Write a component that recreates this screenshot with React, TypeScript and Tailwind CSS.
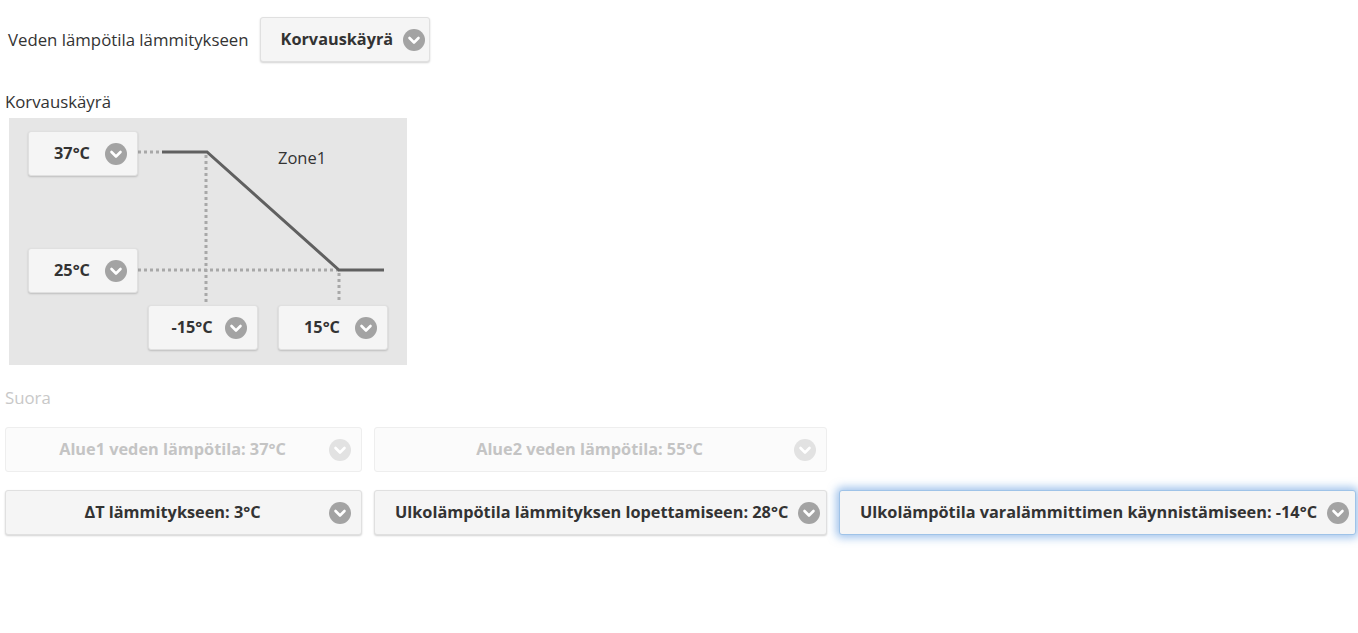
import React from "react";

function Chevron({ disabled }: { disabled?: boolean }) {
  return (
    <svg width="22" height="22" viewBox="0 0 22 22" className="shrink-0">
      <circle cx="11" cy="11" r="11" fill={disabled ? "#e2e2e2" : "#a3a3a3"} />
      <path d="M6.5 9 L11 13.5 L15.5 9" fill="none" stroke="#ffffff" strokeWidth="2.6" strokeLinecap="round" strokeLinejoin="round" />
    </svg>
  );
}

function Btn({
  label,
  className = "",
  disabled,
  focused,
}: {
  label: string;
  className?: string;
  disabled?: boolean;
  focused?: boolean;
}) {
  const base =
    "flex items-center h-[45px] pl-[20px] pr-[10px] gap-[10px] rounded-[3px] border font-bold text-[16.3px] whitespace-nowrap";
  const tone = disabled
    ? "bg-[#fbfbfb] border-[#eeeeee] text-[#c4c4c4]"
    : focused
    ? "bg-[#f5f5f5] border-[#9fc3e8] text-[#333333] shadow-[0_0_8px_3px_rgba(90,150,220,0.55)]"
    : "bg-[#f5f5f5] border-[#e0e0e0] text-[#333333] shadow-[0_1px_2px_rgba(0,0,0,0.18)]";
  return (
    <div className={`${base} ${tone} ${className}`}>
      <span className="flex-1 text-center">{label}</span>
      <Chevron disabled={disabled} />
    </div>
  );
}

export default function App() {
  return (
    <div
      className="w-[1358px] h-[633px] bg-white text-[#333333]"
      style={{ fontFamily: '"Open Sans", "Liberation Sans", sans-serif' }}
    >
      <div className="flex items-center pt-[17px] pl-[8px] gap-[11px]">
        <span className="text-[16.8px]">Veden lämpötila lämmitykseen</span>
        <Btn label="Korvauskäyrä" className="w-[170px]" />
      </div>

      <div className="pl-[5px] pt-[29px] text-[16.8px] leading-[22px]">Korvauskäyrä</div>

      <div className="relative ml-[9px] mt-[5px] w-[398px] h-[247px] bg-[#e6e6e6]">
        <svg className="absolute left-0 top-0" width="398" height="247" viewBox="0 0 398 247">
          <g stroke="#a8a8a8" strokeWidth="3" strokeDasharray="3 3" fill="none">
            <line x1="129" y1="34" x2="153" y2="34" />
            <line x1="129" y1="152" x2="330" y2="152" />
            <line x1="197" y1="37" x2="197" y2="185" />
            <line x1="330" y1="155" x2="330" y2="185" />
          </g>
          <polyline
            points="153,34 198,34 330,152 375,152"
            fill="none"
            stroke="#606060"
            strokeWidth="3"
          />
        </svg>
        <span className="absolute left-[269px] top-[28px] text-[16.5px]">Zone1</span>
        <Btn label="37°C" className="absolute left-[19px] top-[13px] w-[110px]" />
        <Btn label="25°C" className="absolute left-[19px] top-[130px] w-[110px]" />
        <Btn label="-15°C" className="absolute left-[139px] top-[187px] w-[110px]" />
        <Btn label="15°C" className="absolute left-[269px] top-[187px] w-[110px]" />
      </div>

      <div className="pl-[5px] pt-[22px] text-[16.8px] leading-[22px] text-[#c8c8c8]">Suora</div>

      <div className="ml-[5px] mt-[18px] grid grid-cols-[357px_453px_517px] gap-x-[12px] gap-y-[18px]">
        <Btn label="Alue1 veden lämpötila: 37°C" disabled />
        <Btn label="Alue2 veden lämpötila: 55°C" disabled />
        <div />
        <Btn label="ΔT lämmitykseen: 3°C" />
        <Btn label="Ulkolämpötila lämmityksen lopettamiseen: 28°C" />
        <Btn label="Ulkolämpötila varalämmittimen käynnistämiseen: -14°C" focused />
      </div>
    </div>
  );
}
